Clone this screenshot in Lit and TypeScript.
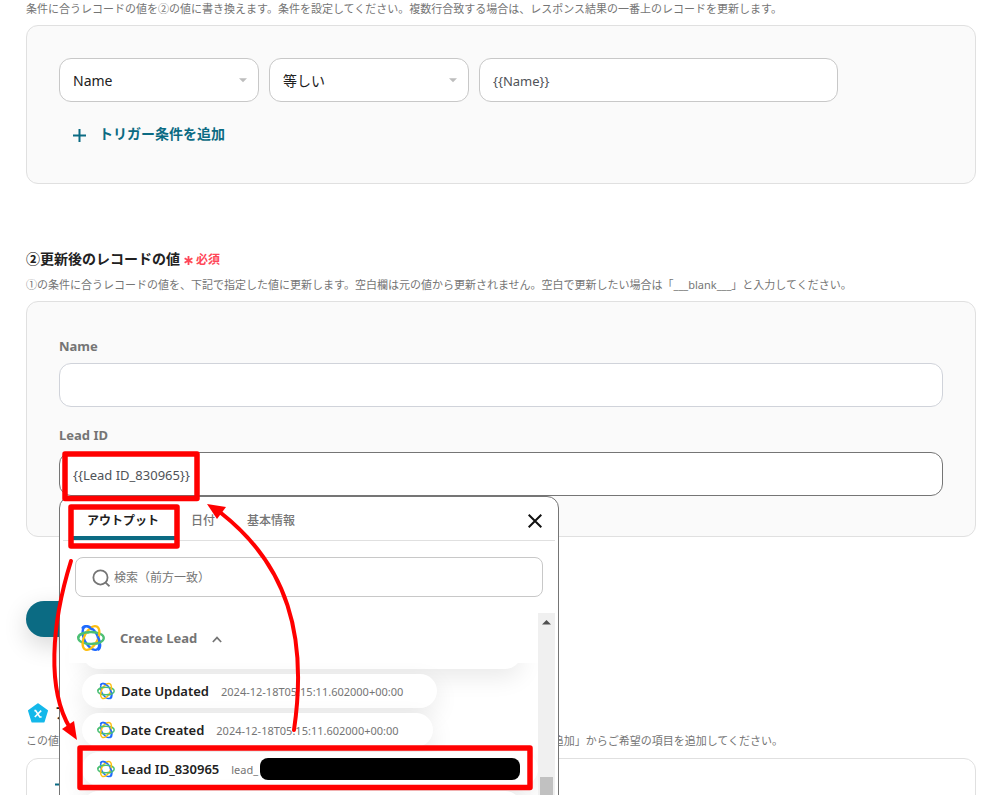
import { LitElement, html, css, svg, nothing } from "lit";
import { customElement, property, state } from "lit/decorators.js";
import { classMap } from "lit/directives/class-map.js";

const FONT = css`"Noto Sans", "Noto Sans CJK JP", sans-serif`;

@customElement("orbit-logo")
export class OrbitLogo extends LitElement {
  static styles = css`
    :host { display: block; flex: none; width: 18px; height: 18px; }
    :host([large]) { width: 28px; height: 28px; }
    .mark { display: block; width: 100%; height: 100%; fill: none; stroke-width: 2.3; }
    .blue { stroke: #1f6bff; }
    .yellow { stroke: #fdbf12; }
    .green { stroke: #4cc075; }
  `;

  render() {
    return html`
      <svg class="mark" viewBox="0 0 28 28" aria-hidden="true">
        <ellipse class="blue" cx="14" cy="14" rx="6.8" ry="12.8" transform="rotate(-27 14 14)" />
        <ellipse class="green" cx="14" cy="14" rx="12.8" ry="6" />
        <ellipse class="yellow" cx="14" cy="14" rx="6.8" ry="12.8" transform="rotate(27 14 14)" />
        <path class="blue" d="M5.2 4.6 C6.8 .8 11.4 1.6 15.2 5.6 M20.6 12.4 C24 18.4 24.2 24.6 20.6 26" />
        <path class="green" d="M1.2 14 C1.2 10.8 6.4 8.2 12 8.1 M15.5 19.9 C19 19.8 22 19.2 24 18" />
      </svg>
    `;
  }
}

interface OutputItem {
  name: string;
  value: string;
  masked?: boolean;
}

@customElement("output-picker")
export class OutputPicker extends LitElement {
  @state() private tab = 0;

  private tabs = ["アウトプット", "日付", "基本情報"];

  private items: OutputItem[] = [
    { name: "Date Updated", value: "2024-12-18T05:15:11.602000+00:00" },
    { name: "Date Created", value: "2024-12-18T05:15:11.602000+00:00" },
    { name: "Lead ID_830965", value: "lead_", masked: true },
  ];

  static styles = css`
    :host {
      display: block;
      box-sizing: border-box;
      width: 500px;
      height: 340px;
      padding: 0 3px;
      overflow: hidden;
      border: 1px solid #757575;
      border-radius: 12px;
      background: #fff;
      font-family: ${FONT};
    }
    button { border: 0; background: none; padding: 0; font: inherit; cursor: pointer; }
    .tabs {
      display: flex;
      align-items: stretch;
      height: 43px;
      padding: 0 8px;
      border-bottom: 1px solid #e0e0e0;
    }
    .tab {
      padding: 9px 16px 0;
      font-size: 12px;
      line-height: 30px;
      font-weight: 500;
      color: #757575;
      border-bottom: 4px solid transparent;
    }
    .tab.active { color: #212121; font-weight: 700; border-color: #0b6b83; }
    .close { margin-left: auto; padding: 10px 5px 5px; }
    .close svg { display: block; width: 14px; height: 14px; stroke: #111; stroke-width: 2; }
    .search {
      display: flex;
      align-items: center;
      gap: 4px;
      box-sizing: border-box;
      height: 40px;
      margin: 16px 12px;
      padding: 2px 16px 0;
      border: 1px solid #c8c8c8;
      border-radius: 8px;
    }
    .search svg { flex: none; width: 18px; height: 18px; fill: none; stroke: #757575; stroke-width: 1.7; }
    .search input {
      flex: 1;
      min-width: 0;
      border: 0;
      outline: 0;
      padding: 0;
      font: 12px/20px ${FONT};
      background: none;
    }
    .search input::placeholder { color: #757575; opacity: 1; }
    .body { display: flex; height: 230px; }
    .list { flex: 1; min-width: 0; overflow: hidden; padding-left: 6px; }
    .group {
      position: relative;
      z-index: 1;
      display: flex;
      align-items: center;
      height: 50px;
      width: 100%;
      margin-bottom: -28px;
      padding-left: 8px;
      gap: 15px;
      background: #fff;
      color: #757575;
      font-size: 13px;
      font-weight: 700;
    }
    .group .chevron { width: 10px; height: 7px; fill: none; stroke: #757575; stroke-width: 2; margin-top: 3px; }
    .items {
      display: flex;
      flex-direction: column;
      align-items: flex-start;
      gap: 5px;
      margin: 0;
      padding: 0 0 0 13px;
      list-style: none;
    }
    .pill {
      display: flex;
      align-items: center;
      box-sizing: border-box;
      height: 34px;
      padding: 0 34px 0 15px;
      border-radius: 17px;
      background: #fff;
      box-shadow: 0 8px 24px rgba(0, 0, 0, 0.09);
      white-space: nowrap;
    }
    .pill.passed { width: 440px; }
    .pill.masked { align-self: stretch; padding-right: 18px; }
    .name { margin: 0 12px 0 6px; font-size: 13px; font-weight: 600; color: #212121; }
    .value { font-size: 11px; color: #757575; }
    .mask { width: 260px; height: 22px; margin-left: auto; border-radius: 8px; background: #000; }
    .track { display: flex; flex-direction: column; align-items: center; width: 17px; background: #f0f0f0; }
    .arrow { width: 9px; height: 5px; margin: 7px 0 152px; fill: #505050; }
    .thumb { flex: 1; width: 13px; background: #c1c1c1; }
  `;

  render() {
    return html`
      <div class="tabs" role="tablist">
        ${this.tabs.map(
          (label, i) => html`
            <button
              class=${classMap({ tab: true, active: i === this.tab })}
              role="tab"
              aria-selected=${i === this.tab ? "true" : "false"}
              @click=${() => (this.tab = i)}
            >${label}</button>
          `
        )}
        <button class="close" aria-label="閉じる">
          <svg viewBox="0 0 14 14"><path d="M.7.7 13.3 13.3M13.3.7.7 13.3" /></svg>
        </button>
      </div>
      <label class="search">
        <svg viewBox="0 0 17 17" aria-hidden="true"><circle cx="8" cy="8" r="6.7" /><path d="M12.6 12.6 16.5 16.3" /></svg>
        <input type="text" placeholder="検索（前方一致）" aria-label="検索（前方一致）" />
      </label>
      <div class="body">
        <div class="list">
          <button class="group">
            <orbit-logo large></orbit-logo>
            <span>Create Lead</span>
            <svg class="chevron" viewBox="0 0 12 8"><path d="M1 7 6 1.7 11 7" /></svg>
          </button>
          <ul class="items">
            <li class="pill passed"></li>
            ${this.items.map(
              (item) => html`
                <li class=${classMap({ pill: true, masked: !!item.masked })}>
                  <orbit-logo></orbit-logo>
                  <span class="name">${item.name}</span>
                  <span class="value">${item.value}</span>
                  ${item.masked ? html`<span class="mask"></span>` : nothing}
                </li>
              `
            )}
            <li class="pill passed"></li>
          </ul>
        </div>
        <div class="track">
          <svg class="arrow" viewBox="0 0 9 5"><path d="M0 4.5 4.5 0 9 4.5Z" /></svg>
          <div class="thumb"></div>
        </div>
      </div>
    `;
  }
}

@customElement("callout-marks")
export class CalloutMarks extends LitElement {
  static styles = css`
    :host { position: absolute; left: 0; top: 0; pointer-events: none; z-index: 3; }
    .marks { display: block; width: 560px; height: 795px; overflow: visible; }
    .line { fill: none; stroke: #f00; stroke-width: 4; stroke-linecap: round; }
    .box { fill: none; stroke: #f00; stroke-width: 5.5; stroke-linejoin: round; }
    .head { fill: #f00; }
  `;

  private boxes = [
    { x: 65, y: 454, w: 132, h: 44.5 },
    { x: 71, y: 507, w: 106, h: 39 },
    { x: 80, y: 748, w: 450, h: 39.5 },
  ];

  render() {
    return html`
      <svg class="marks" viewBox="0 0 560 795" aria-hidden="true">
        ${this.boxes.map((b) => svg`<rect class="box" x=${b.x} y=${b.y} width=${b.w} height=${b.h} />`)}
        <path class="line" d="M71 561 C51 625 47 690 70 728" />
        <path class="head" d="M77 740 62 729 74 721Z" />
        <path class="line" d="M294 730 C308 635 287 565 221 513" />
        <path class="head" d="M207 504 226 507 217 519Z" />
      </svg>
    `;
  }
}

@customElement("app-root")
export class AppRoot extends LitElement {
  @property() leadValue = "{{Lead ID_830965}}";

  static styles = css`
    :host {
      display: block;
      position: relative;
      box-sizing: border-box;
      height: 100vh;
      overflow: hidden;
      padding: 0 25px 0 26px;
      background: #fff;
      color: #212121;
      font-family: ${FONT};
    }
    .note { margin: 0; font-size: 11px; line-height: 18px; color: #757575; white-space: nowrap; }
    .panel {
      box-sizing: border-box;
      margin-top: 7px;
      padding: 32px 32px 40px;
      border: 1px solid #e0e0e0;
      border-radius: 12px;
      background: #fafafa;
    }
    .panel.plain { margin-top: 8px; padding: 0 14px 32px; background: #fff; }
    .conditions { display: grid; grid-template-columns: 200px 200px minmax(0, 359px); gap: 10px; }
    .picker { position: relative; display: block; }
    .picker svg { position: absolute; right: 12px; top: 20px; width: 8px; height: 5px; fill: #bdbdbd; pointer-events: none; }
    select,
    .box {
      display: block;
      box-sizing: border-box;
      width: 100%;
      height: 44px;
      padding: 2px 13px 0;
      border: 1px solid #c8c8c8;
      border-radius: 12px;
      background: #fff;
      outline: 0;
      font: 14px/20px ${FONT};
      color: #212121;
      appearance: none;
    }
    .box { font-size: 13px; color: #4f5358; }
    .box.light { border-color: #d0d3da; }
    .box.focused { border-color: #757575; }
    .add {
      display: flex;
      align-items: center;
      gap: 13px;
      margin-top: 20px;
      padding: 0 14px;
      border: 0;
      background: none;
      color: #0b6b83;
      font: 700 14px/24px ${FONT};
    }
    .add svg { width: 13px; height: 13px; margin-top: 2px; stroke: #0b6b83; stroke-width: 2; flex: none; }
    .panel.trigger { padding-bottom: 37px; }
    .heading {
      display: flex;
      align-items: center;
      gap: 4px;
      margin: 0;
      font-size: 14px;
      line-height: 24px;
      font-weight: 700;
      white-space: nowrap;
    }
    .heading.values { margin-top: 63px; margin-bottom: 5px; }
    .required { display: flex; align-items: center; gap: 3px; padding-top: 2px; color: #ff4757; font-size: 12px; }
    .required svg { width: 9px; height: 9px; stroke: #ff4757; stroke-width: 1.8; }
    .values { height: 24px; }
    .heading.outputs { margin-top: 64px; margin-bottom: 7px; gap: 7px; }
    .heading.outputs svg { width: 20px; height: 20px; margin-left: 2px; }
    .field { position: relative; }
    .field + .field { margin-top: 16px; }
    .field label {
      display: block;
      padding-top: 2px;
      margin-bottom: 7px;
      font-size: 13px;
      line-height: 20px;
      font-weight: 700;
      color: #757575;
    }
    output-picker { position: absolute; left: 0; top: 73px; z-index: 2; }
    .submit {
      display: block;
      width: 200px;
      height: 36px;
      margin-top: 64px;
      border: 0;
      border-radius: 18px;
      background: #0b6b83;
      box-shadow: 0 8px 24px rgba(0, 0, 0, 0.16);
    }
    .plain .add { margin-top: 19px; height: 13px; }
    .plain .add svg { margin-top: 0; }
  `;

  private arrow() {
    return html`<svg viewBox="0 0 9 5" aria-hidden="true"><path d="M0 0H9L4.5 4.5Z" /></svg>`;
  }

  private plus() {
    return html`<svg viewBox="0 0 13 13" aria-hidden="true"><path d="M6.5 0V13M0 6.5H13" /></svg>`;
  }

  render() {
    return html`
      <p class="note">条件に合うレコードの値を②の値に書き換えます。条件を設定してください。複数行合致する場合は、レスポンス結果の一番上のレコードを更新します。</p>
      <section class="panel trigger">
        <div class="conditions">
          <span class="picker">
            <select aria-label="項目"><option>Name</option></select>
            ${this.arrow()}
          </span>
          <span class="picker">
            <select aria-label="条件"><option>等しい</option></select>
            ${this.arrow()}
          </span>
          <input class="box" type="text" aria-label="値" .value=${"{{Name}}"} />
        </div>
        <button class="add">${this.plus()}<span>トリガー条件を追加</span></button>
      </section>

      <h2 class="heading values">
        <span>②更新後のレコードの値</span>
        <span class="required">
          <svg viewBox="0 0 9 9" aria-hidden="true"><path d="M4.5 0V9M.6 2.25 8.4 6.75M8.4 2.25.6 6.75" /></svg>必須
        </span>
      </h2>
      <p class="note">①の条件に合うレコードの値を、下記で指定した値に更新します。空白欄は元の値から更新されません。空白で更新したい場合は「___blank___」と入力してください。</p>
      <section class="panel">
        <div class="field">
          <label for="name">Name</label>
          <input id="name" class="box light" type="text" />
        </div>
        <div class="field">
          <label for="lead">Lead ID</label>
          <input id="lead" class="box focused" type="text" .value=${this.leadValue} />
          <output-picker></output-picker>
        </div>
      </section>

      <button class="submit" aria-label="保存する"></button>

      <h2 class="heading outputs">
        <svg viewBox="0 0 20 20" aria-hidden="true">
          <path fill="#14b8ea" stroke="#14b8ea" stroke-width="2" stroke-linejoin="round" d="M10 1.2 19 7.8 15.6 18.6H4.4L1 7.8Z" />
          <path fill="none" stroke="#fff" stroke-width="1.6" d="M6.4 7.6H7.6L11.8 14H13.6M13.2 7.6 6.8 14" />
        </svg>
        <span>アウトプット</span>
      </h2>
      <p class="note">この値を次以降のオペレーションに利用できます。必要な項目がない場合は、下記にある「アウトプットを追加」からご希望の項目を追加してください。</p>
      <section class="panel plain">
        <button class="add" aria-label="アウトプットを追加">${this.plus()}</button>
      </section>
      <callout-marks></callout-marks>
    `;
  }
}
